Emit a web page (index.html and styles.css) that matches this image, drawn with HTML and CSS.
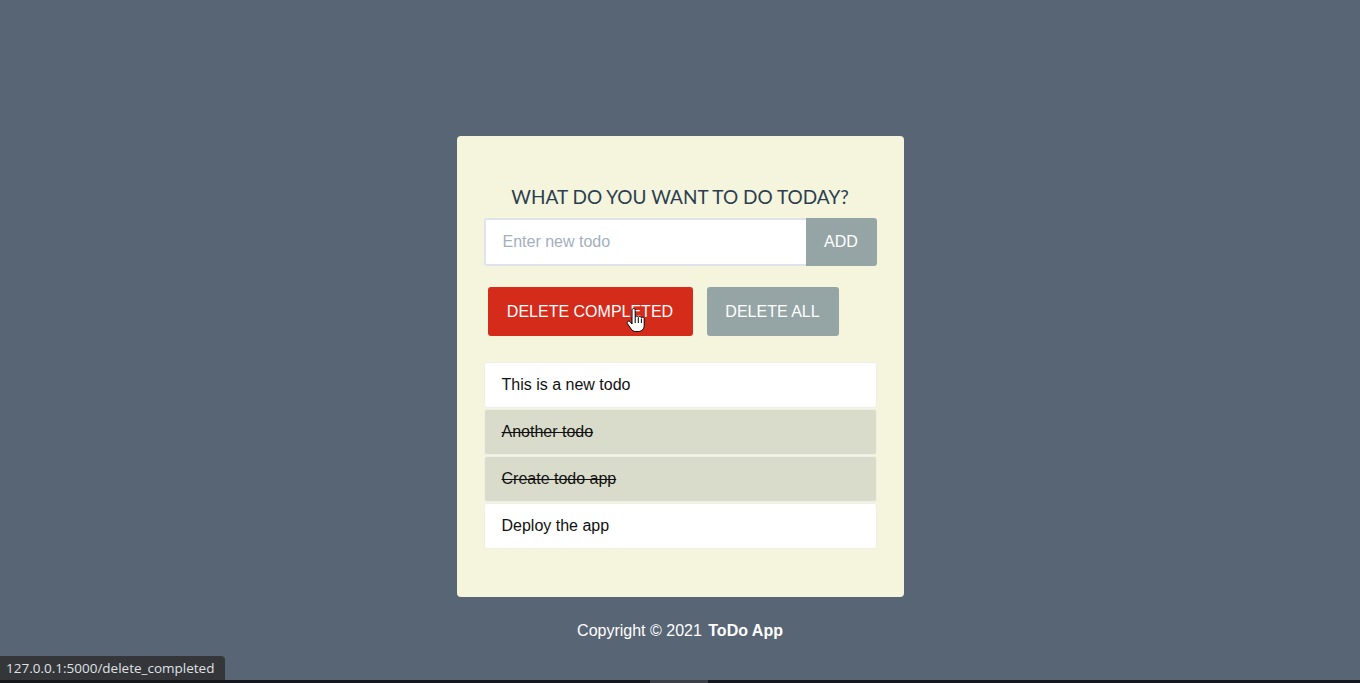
FILE: index.html
```html
<!DOCTYPE html>
<html lang="en">
<head>
<meta charset="utf-8">
<title>ToDo App</title>
<link rel="stylesheet" href="styles.css">
</head>
<body>
<main class="page">
  <section class="card">
    <h1 class="title">WHAT DO YOU WANT TO DO TODAY?</h1>
    <form class="add-form">
      <input class="todo-input" type="text" placeholder="Enter new todo">
      <button class="btn btn-add" type="button">ADD</button>
    </form>
    <div class="actions">
      <a class="btn btn-danger">DELETE COMPLETED</a>
      <a class="btn btn-grey">DELETE ALL</a>
    </div>
    <ul class="todo-list">
      <li class="todo-item">This is a new todo</li>
      <li class="todo-item done">Another todo</li>
      <li class="todo-item done">Create todo app</li>
      <li class="todo-item">Deploy the app</li>
    </ul>
  </section>
  <footer class="footer">Copyright © 2021 <strong>ToDo App</strong></footer>
</main>
<svg class="cursor" width="20" height="26" viewBox="0 0 20 26" aria-hidden="true">
  <path d="M6 2.2c0-1 .7-1.7 1.6-1.7S9.2 1.2 9.2 2.2V9c.3-.6.9-.9 1.5-.9.8 0 1.4.5 1.6 1.2.3-.5.9-.8 1.5-.8.8 0 1.4.5 1.6 1.2.3-.3.7-.5 1.2-.5.9 0 1.6.7 1.6 1.7v6.4c0 3.6-2.4 6.2-5.9 6.2H9.7c-2 0-3.4-.8-4.5-2.4L1.4 15.7c-.5-.8-.3-1.800.4-2.3.7-.5 1.7-.4 2.3.3L6 16V2.2z" fill="#fff" stroke="#000" stroke-width="1"/>
  <path d="M9.2 9v6M12.3 9.6v5.4M15.4 10.6v4.4" stroke="#000" stroke-width="1" fill="none"/>
</svg>
<div class="statusbar">127.0.0.1:5000/delete_completed</div>
<div class="taskline"><span class="taskline-seg"></span></div>
</body>
</html>
```
FILE: styles.css
```css
* { box-sizing: border-box; }
html, body { margin: 0; padding: 0; }
body {
  background: #586574;
  font-family: "Liberation Sans", Arial, sans-serif;
  height: 683px;
  overflow: hidden;
}
.page {
  display: flex;
  flex-direction: column;
  align-items: center;
  padding-top: 136px;
}
.card {
  width: 447px;
  height: 461px;
  background: #f4f5dc;
  border-radius: 4px;
  padding: 49px 27px 0 27px;
}
.title {
  margin: 0 0 10px 0;
  font-family: Lato, "Open Sans", sans-serif;
  font-weight: 400;
  font-size: 19px;
  line-height: 23px;
  text-align: center;
  color: #2c3e50;
}
.add-form {
  display: flex;
  margin: 0;
}
.todo-input {
  flex: 1;
  height: 48px;
  border: 2px solid #dde4ea;
  border-right: none;
  border-radius: 3px 0 0 3px;
  padding: 0 17px;
  font-family: "Liberation Sans", Arial, sans-serif;
  font-size: 16px;
  color: #333;
  background: #fff;
  outline: none;
}
.todo-input::placeholder { color: #a4b0be; }
.btn {
  display: inline-flex;
  align-items: center;
  justify-content: center;
  height: 49px;
  border: none;
  color: #fff;
  font-family: "Liberation Sans", Arial, sans-serif;
  font-size: 16px;
  border-radius: 3px;
  cursor: pointer;
}
.btn-add {
  width: 71px;
  height: 48px;
  background: #95a5a6;
  border-radius: 0 3px 3px 0;
}
.actions {
  display: flex;
  gap: 14px;
  padding-left: 4px;
  margin-top: 21px;
}
.btn-danger {
  width: 205px;
  background: #d52b1a;
}
.btn-grey {
  width: 132px;
  background: #95a5a6;
}
.todo-list {
  list-style: none;
  margin: 26px 0 0 0;
  padding: 0;
  display: flex;
  flex-direction: column;
  gap: 1px;
}
.todo-item {
  height: 46px;
  display: flex;
  align-items: center;
  padding: 0 17px;
  background: #fff;
  border: 1px solid #eeefe6;
  border-radius: 3px;
  font-size: 16px;
  color: #111;
}
.todo-item.done {
  background: #d9dccb;
  text-decoration: line-through;
}
.footer {
  margin-top: 25px;
  color: #fff;
  font-size: 16px;
  line-height: 18px;
}
.footer strong { font-weight: 700; margin-left: 2px; }
.cursor {
  position: absolute;
  left: 626px;
  top: 308px;
}
.statusbar {
  position: fixed;
  left: 0;
  bottom: 3px;
  width: 225px;
  height: 24px;
  background: #35363a;
  border-radius: 0 4px 0 0;
  color: #dfe1e5;
  font-family: "Open Sans", "Noto Sans", sans-serif;
  font-size: 13.5px;
  line-height: 24px;
  padding-left: 6px;
  white-space: nowrap;
}
.taskline {
  position: fixed;
  left: 0;
  right: 0;
  bottom: 0;
  height: 3px;
  background: #16171a;
}
.taskline-seg {
  position: absolute;
  left: 650px;
  width: 58px;
  top: 0;
  height: 3px;
  background: #3d3f44;
}
```
